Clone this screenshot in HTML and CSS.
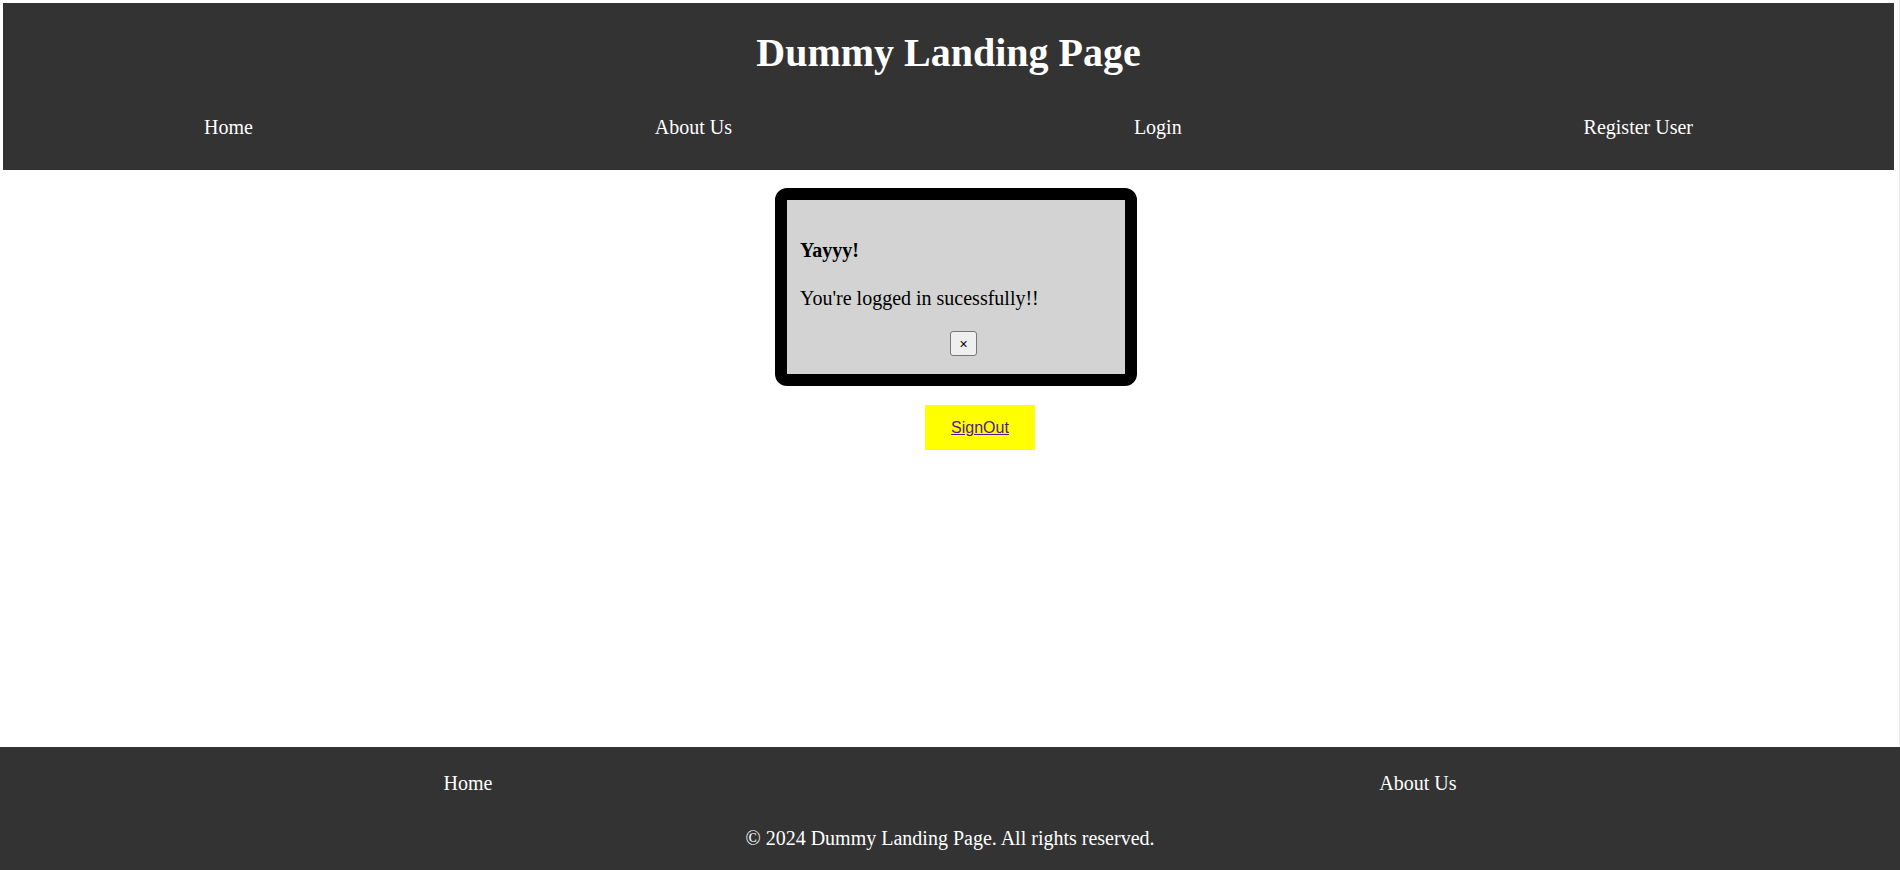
FILE: index.html
```html
<!DOCTYPE html>
<html lang="en">
<head>
<meta charset="utf-8">
<title>Dummy Landing Page</title>
<link rel="stylesheet" href="styles.css">
</head>
<body>
<div class="page">
  <header class="site-header">
    <h1 class="site-title">Dummy Landing Page</h1>
    <nav class="main-nav">
      <a href="#" class="nav-link">Home</a>
      <a href="#" class="nav-link">About Us</a>
      <a href="#" class="nav-link">Login</a>
      <a href="#" class="nav-link">Register User</a>
    </nav>
  </header>
  <main class="content">
    <div class="modal">
      <p class="modal-title">Yayyy!</p>
      <p class="modal-msg">You're logged in sucessfully!!</p>
      <div class="modal-actions"><button class="close-btn" type="button">×</button></div>
    </div>
    <a href="#" class="signout">SignOut</a>
  </main>
</div>
<footer class="site-footer">
  <nav class="footer-nav">
    <a href="#" class="nav-link">Home</a>
    <a href="#" class="nav-link">About Us</a>
  </nav>
  <p class="copyright">© 2024 Dummy Landing Page. All rights reserved.</p>
</footer>
</body>
</html>
```
FILE: styles.css
```css
html {
  background: #ffffff;
}
body {
  margin: 0;
  min-height: 100vh;
  display: flex;
  flex-direction: column;
  font-family: "Liberation Serif", "Times New Roman", serif;
  font-size: 20px;
  line-height: 22px;
  color: #000;
}
.page {
  flex: 1;
  display: flex;
  flex-direction: column;
  padding: 3px 5px 0 3px;
  border-right: 1px solid #ededed;
}
.site-header {
  background: #333333;
  color: #fff;
  padding: 28px 0 32px;
}
.site-title {
  margin: 0 0 41px;
  text-align: center;
  font-size: 40px;
  line-height: 44px;
  font-weight: bold;
}
.main-nav,
.footer-nav {
  display: flex;
  justify-content: space-around;
}
.nav-link {
  color: #fff;
  text-decoration: none;
}
.content {
  flex: 1;
  display: flex;
  flex-direction: column;
  align-items: center;
  padding-top: 18px;
}
.modal {
  box-sizing: border-box;
  width: 362px;
  margin-left: 15px;
  border: 12px solid #000;
  border-radius: 12px;
  background: #d3d3d3;
  padding: 19px 13px 18px;
}
.modal-title {
  margin: 20px 0 26px;
  font-weight: bold;
}
.modal-msg {
  margin: 0 0 22px;
}
.modal-actions {
  display: flex;
  justify-content: center;
  padding-left: 15px;
}
.close-btn {
  font-family: "Liberation Sans", Arial, sans-serif;
  font-size: 14px;
  line-height: 16px;
  width: 27px;
  height: 25px;
  padding: 0;
  background: #efefef;
  border: 1px solid #767676;
  border-radius: 3px;
  color: #000;
}
.signout {
  margin: 19px 0 0 63px;
  background: #ffff00;
  padding: 13px 26px;
  line-height: 19px;
  font-family: "Liberation Sans", Arial, sans-serif;
  font-size: 16px;
  color: #551a8b;
  text-decoration: underline;
}
.site-footer {
  background: #333333;
  color: #fff;
  padding: 25px 0 21px;
}
.copyright {
  margin: 33px 0 0;
  text-align: center;
}
```
